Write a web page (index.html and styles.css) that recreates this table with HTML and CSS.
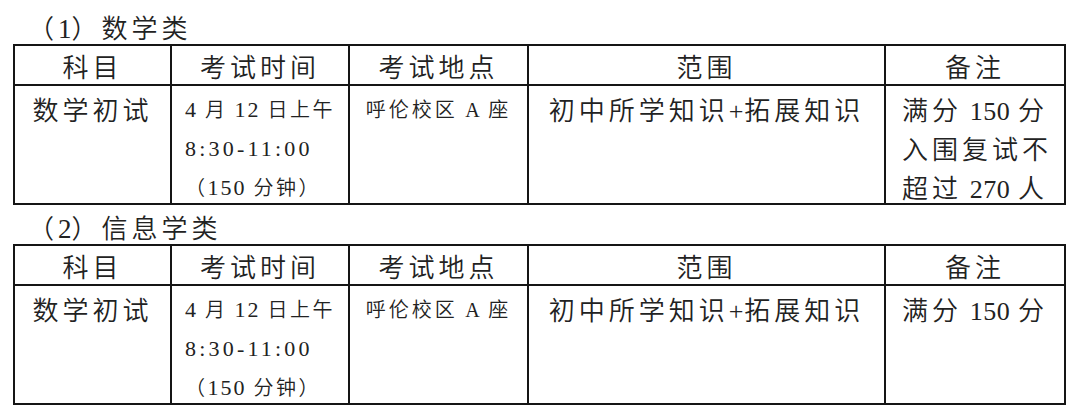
FILE: index.html
```html
<!DOCTYPE html>
<html lang="zh-CN">
<head>
<meta charset="utf-8">
<title>考试安排</title>
<link rel="stylesheet" href="styles.css">
</head>
<body>
<div class="page">
  <h2 class="cat">（<span class="d">1</span>）数学类</h2>
  <div class="tbl">
    <div class="cell head">科目</div>
    <div class="cell head">考试时间</div>
    <div class="cell head">考试地点</div>
    <div class="cell head">范围</div>
    <div class="cell head">备注</div>
    <div class="cell body subj"><div class="ln">数学初试</div></div>
    <div class="cell body time">
      <div class="ln"><span class="d">4</span> 月 <span class="d">12</span> 日上午</div>
      <div class="ln"><span class="d t">8:30-11:00</span></div>
      <div class="ln">（<span class="d">150</span> 分钟）</div>
    </div>
    <div class="cell body place"><div class="ln">呼伦校区 <span class="d">A</span> 座</div></div>
    <div class="cell body range"><div class="ln">初中所学知识<span class="d">+</span>拓展知识</div></div>
    <div class="cell body note">
      <div class="ln">满分 <span class="d">150</span> 分</div>
      <div class="ln">入围复试不</div>
      <div class="ln">超过 <span class="d">270</span> 人</div>
    </div>
  </div>
  <h2 class="cat">（<span class="d">2</span>）信息学类</h2>
  <div class="tbl">
    <div class="cell head">科目</div>
    <div class="cell head">考试时间</div>
    <div class="cell head">考试地点</div>
    <div class="cell head">范围</div>
    <div class="cell head">备注</div>
    <div class="cell body subj"><div class="ln">数学初试</div></div>
    <div class="cell body time">
      <div class="ln"><span class="d">4</span> 月 <span class="d">12</span> 日上午</div>
      <div class="ln"><span class="d t">8:30-11:00</span></div>
      <div class="ln">（<span class="d">150</span> 分钟）</div>
    </div>
    <div class="cell body place"><div class="ln">呼伦校区 <span class="d">A</span> 座</div></div>
    <div class="cell body range"><div class="ln">初中所学知识<span class="d">+</span>拓展知识</div></div>
    <div class="cell body note">
      <div class="ln">满分 <span class="d">150</span> 分</div>
    </div>
  </div>
</div>
</body>
</html>
```
FILE: styles.css
```css
html, body {
  margin: 0;
  padding: 0;
  background: #ffffff;
}
body {
  font-family: "Noto Sans CJK SC", sans-serif;
  color: #222222;
  font-weight: 350;
}
.d {
  font-family: "Liberation Serif", serif;
  font-weight: 400;
  letter-spacing: 1px;
}
.page {
  padding-top: 5px;
  width: 1080px;
}
.cat {
  margin: 0;
  height: 39px;
  box-sizing: border-box;
  padding: 4px 0 0 28px;
  font-size: 26px;
  line-height: 35px;
  font-weight: 350;
  letter-spacing: 4px;
  white-space: nowrap;
}
.cat .d { font-size: 27px; letter-spacing: 0; }
.tbl {
  display: grid;
  grid-template-columns: 157px 178px 179px 357px 180px;
  grid-template-rows: 40px 119px;
  margin-left: 13px;
  width: max-content;
  border-left: 2px solid #151515;
  border-top: 2px solid #151515;
}
.cell {
  box-sizing: border-box;
  border-right: 2px solid #151515;
  border-bottom: 2px solid #151515;
  overflow: hidden;
  white-space: nowrap;
}
.head {
  padding-top: 2px;
  font-size: 26px;
  line-height: 36px;
  letter-spacing: 4px;
  text-align: center;
}
.body {
  padding-top: 3px;
  font-size: 26px;
  letter-spacing: 4px;
}
.ln {
  height: 39px;
  line-height: 39px;
}
.subj { text-align: center; }
.time {
  font-size: 20px;
  letter-spacing: 2.5px;
  padding-left: 13px;
}
.time .d { font-size: 22px; letter-spacing: 2px; }
.time .t { letter-spacing: 3.2px; }
.place {
  text-align: center;
  font-size: 20px;
  letter-spacing: 3px;
}
.range { text-align: center; }
.note { padding-left: 16px; word-spacing: -2px; }
.note .d { letter-spacing: 0.5px; }
```
